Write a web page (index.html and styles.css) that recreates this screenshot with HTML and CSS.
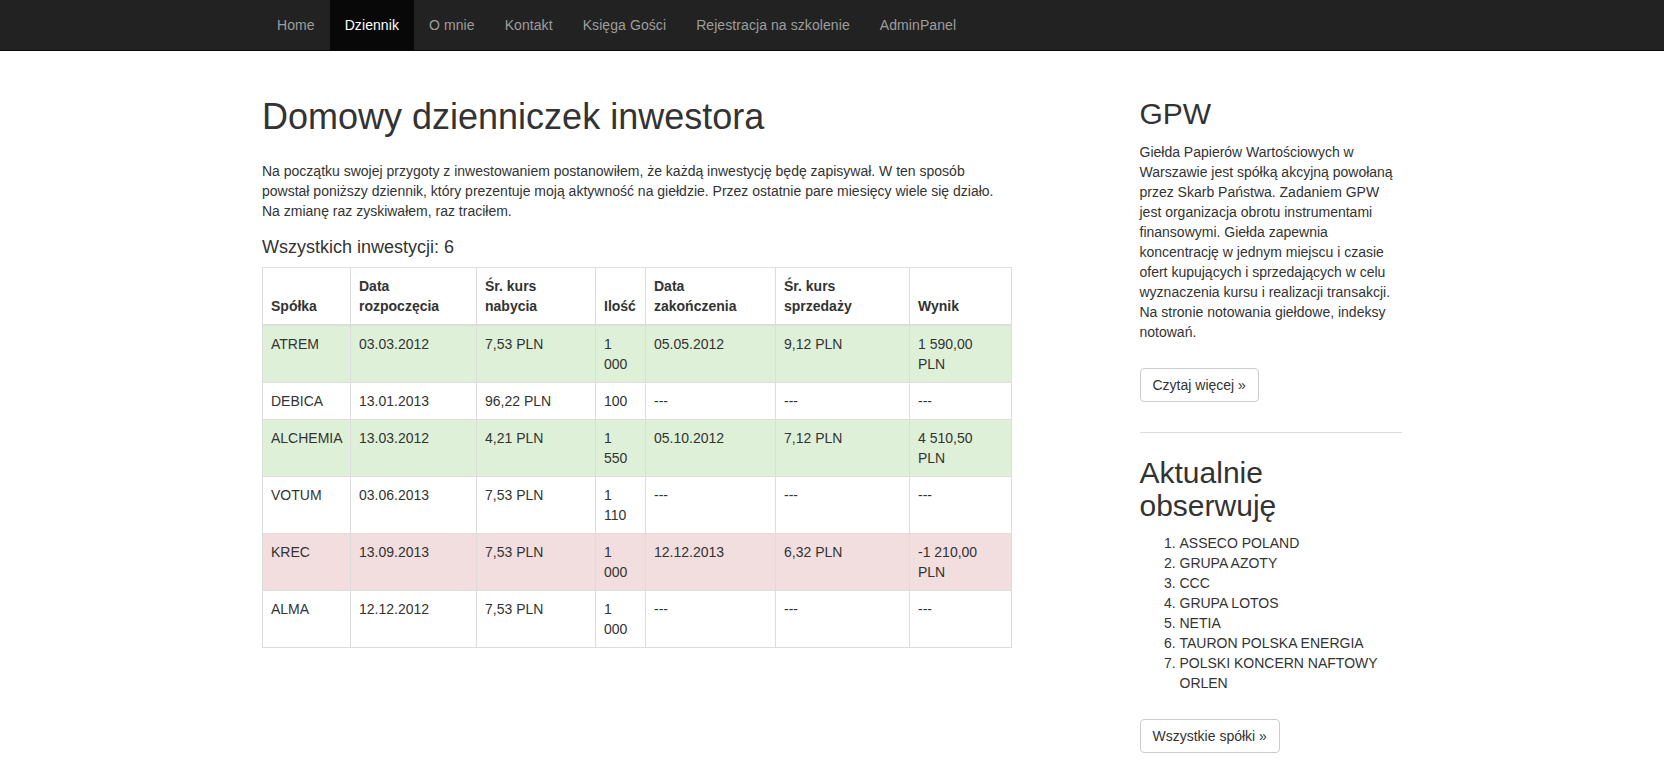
FILE: index.html
```html
<!DOCTYPE html>
<html lang="pl">
<head>
<meta charset="utf-8">
<title>Dziennik</title>
<link rel="stylesheet" href="styles.css">
</head>
<body>
<nav class="navbar">
  <div class="container">
    <ul class="nav">
      <li><a href="#">Home</a></li>
      <li class="active"><a href="#">Dziennik</a></li>
      <li><a href="#">O mnie</a></li>
      <li><a href="#">Kontakt</a></li>
      <li><a href="#">Księga Gości</a></li>
      <li><a href="#">Rejestracja na szkolenie</a></li>
      <li><a href="#">AdminPanel</a></li>
    </ul>
  </div>
</nav>
<div class="container main">
  <div class="row">
    <div class="col-main">
      <h1 class="title">Domowy dzienniczek inwestora</h1>
      <p class="intro">Na początku swojej przygoty z inwestowaniem postanowiłem, że każdą inwestycję będę zapisywał. W ten sposób powstał poniższy dziennik, który prezentuje moją aktywność na giełdzie. Przez ostatnie pare miesięcy wiele się działo. Na zmianę raz zyskiwałem, raz traciłem.</p>
      <h4 class="count">Wszystkich inwestycji: 6</h4>
      <table class="table">
        <colgroup>
          <col class="c1"><col class="c2"><col class="c3"><col class="c4"><col class="c5"><col class="c6"><col class="c7">
        </colgroup>
        <thead>
          <tr>
            <th>Spółka</th>
            <th>Data rozpoczęcia</th>
            <th>Śr. kurs nabycia</th>
            <th>Ilość</th>
            <th>Data zakończenia</th>
            <th>Śr. kurs sprzedaży</th>
            <th>Wynik</th>
          </tr>
        </thead>
        <tbody>
          <tr class="success">
            <td>ATREM</td><td>03.03.2012</td><td>7,53 PLN</td><td>1 000</td><td>05.05.2012</td><td>9,12 PLN</td><td>1 590,00 PLN</td>
          </tr>
          <tr>
            <td>DEBICA</td><td>13.01.2013</td><td>96,22 PLN</td><td>100</td><td>---</td><td>---</td><td>---</td>
          </tr>
          <tr class="success">
            <td>ALCHEMIA</td><td>13.03.2012</td><td>4,21 PLN</td><td>1 550</td><td>05.10.2012</td><td>7,12 PLN</td><td>4 510,50 PLN</td>
          </tr>
          <tr>
            <td>VOTUM</td><td>03.06.2013</td><td>7,53 PLN</td><td>1 110</td><td>---</td><td>---</td><td>---</td>
          </tr>
          <tr class="danger">
            <td>KREC</td><td>13.09.2013</td><td>7,53 PLN</td><td>1 000</td><td>12.12.2013</td><td>6,32 PLN</td><td>-1 210,00 PLN</td>
          </tr>
          <tr>
            <td>ALMA</td><td>12.12.2012</td><td>7,53 PLN</td><td>1 000</td><td>---</td><td>---</td><td>---</td>
          </tr>
        </tbody>
      </table>
    </div>
    <div class="col-side">
      <h2 class="side-title">GPW</h2>
      <p class="side-text">Giełda Papierów Wartościowych w Warszawie jest spółką akcyjną powołaną przez Skarb Państwa. Zadaniem GPW jest organizacja obrotu instrumentami finansowymi. Giełda zapewnia koncentrację w jednym miejscu i czasie ofert kupujących i sprzedających w celu wyznaczenia kursu i realizacji transakcji. Na stronie notowania giełdowe, indeksy notowań.</p>
      <p class="action first"><a class="btn" href="#">Czytaj więcej »</a></p>
      <hr class="divider">
      <h2 class="side-title second">Aktualnie obserwuję</h2>
      <ol class="watch">
        <li>ASSECO POLAND</li>
        <li>GRUPA AZOTY</li>
        <li>CCC</li>
        <li>GRUPA LOTOS</li>
        <li>NETIA</li>
        <li>TAURON POLSKA ENERGIA</li>
        <li>POLSKI KONCERN NAFTOWY ORLEN</li>
      </ol>
      <p class="action last"><a class="btn" href="#">Wszystkie spółki »</a></p>
    </div>
  </div>
</div>
</body>
</html>
```
FILE: styles.css
```css
* {
  box-sizing: border-box;
}
html, body {
  margin: 0;
  padding: 0;
}
body {
  font-family: "Liberation Sans", Arial, Helvetica, sans-serif;
  font-size: 14px;
  line-height: 20px;
  color: #333;
  background: #fff;
}
a {
  text-decoration: none;
}
.container {
  width: 1170px;
  margin: 0 auto;
  padding: 0 15px;
}
.navbar {
  background: #222;
  border-bottom: 1px solid #080808;
}
.nav {
  display: flex;
  list-style: none;
  margin: 0;
  padding: 0;
}
.nav a {
  display: block;
  padding: 15px;
  line-height: 20px;
  color: #9d9d9d;
  letter-spacing: 0.08px;
}
.nav .active a {
  background: #080808;
  color: #fff;
}
.main {
  padding-top: 26px;
}
.row {
  display: flex;
  margin: 0 -15px;
}
.col-main {
  width: 780px;
  padding: 0 15px;
}
.col-side {
  width: 292.5px;
  margin-left: 97.5px;
  padding: 0 15px;
}
.title {
  font-size: 36px;
  font-weight: 500;
  line-height: 1.1;
  margin: 20px 0 24px;
}
.intro {
  margin: 0 0 10px;
}
.count {
  font-size: 18px;
  font-weight: 500;
  line-height: 1.1;
  margin: 17px 0 10px;
}
.table {
  width: 749px;
  table-layout: fixed;
  border-collapse: collapse;
  border: 1px solid #ddd;
  margin-bottom: 20px;
}
.c1 { width: 88px; }
.c2 { width: 126px; }
.c3 { width: 119px; }
.c4 { width: 50px; }
.c5 { width: 130px; }
.c6 { width: 134px; }
.c7 { width: 102px; }
.table th,
.table td {
  padding: 8px;
  border: 1px solid #ddd;
  text-align: left;
  line-height: 20px;
}
.table th {
  vertical-align: bottom;
  font-weight: bold;
  border-bottom: 2px solid #ddd;
}
.table td {
  vertical-align: top;
}
.table .success td {
  background: #dff0d8;
}
.table .danger td {
  background: #f2dede;
}
.side-title {
  font-size: 30px;
  font-weight: 500;
  line-height: 1.1;
  margin: 20px 0 12px;
}
.side-title.second {
  margin-top: 23px;
  margin-bottom: 11px;
}
.side-text {
  margin: 0 0 10px;
}
.action {
  margin: 0 0 10px;
}
.action.first {
  margin-top: 26px;
}
.action.last {
  margin-top: 26px;
}
.btn {
  display: inline-block;
  padding: 6px 12px;
  line-height: 20px;
  font-size: 14px;
  color: #333;
  background: #fff;
  border: 1px solid #ccc;
  border-radius: 4px;
}
.divider {
  border: 0;
  border-top: 1px solid #ddd;
  margin: 30px 0 20px;
  height: 0;
}
.watch {
  margin: 0;
  padding-left: 40px;
}
```
